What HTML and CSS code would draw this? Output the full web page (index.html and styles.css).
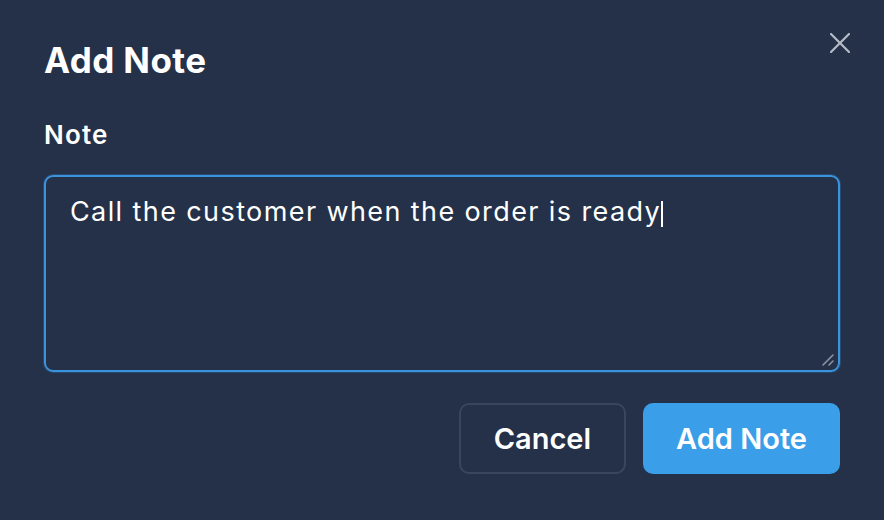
FILE: index.html
```html
<!DOCTYPE html>
<html lang="en">
<head>
<meta charset="utf-8">
<title>Add Note</title>
<link rel="stylesheet" href="styles.css">
</head>
<body>
<div class="dialog" role="dialog" aria-labelledby="dlg-title">
  <button class="close" aria-label="Close">
    <svg width="20" height="20" viewBox="0 0 20 20" fill="none" stroke="currentColor" stroke-width="2.2" stroke-linecap="round"><path d="M1 1L19 19M19 1L1 19"/></svg>
  </button>
  <h2 class="title" id="dlg-title">Add Note</h2>
  <label class="label" for="note">Note</label>
  <div class="field" id="note">
    <span class="value">Call the customer when the order is ready</span><span class="caret"></span>
    <svg class="grip" width="14" height="14" viewBox="0 0 14 14" stroke="#8a93a3" stroke-width="1.6" stroke-linecap="round"><path d="M2 12L12 2M8 12L12 8"/></svg>
  </div>
  <div class="actions">
    <button class="btn btn-secondary">Cancel</button>
    <button class="btn btn-primary">Add Note</button>
  </div>
</div>
</body>
</html>
```
FILE: styles.css
```css
* { box-sizing: border-box; }
html, body { margin: 0; height: 100%; }
body {
  background: #243148;
  font-family: Inter, "Open Sans", sans-serif;
  color: #ffffff;
}
.dialog {
  position: relative;
  height: 520px;
  padding: 39px 44px 46px 44px;
  display: flex;
  flex-direction: column;
}
.close {
  position: absolute;
  top: 33px;
  right: 34px;
  width: 20px;
  height: 20px;
  padding: 0;
  border: 0;
  background: none;
  color: #b4bcc8;
  display: flex;
}
.title {
  margin: 0;
  font-size: 35px;
  line-height: 42px;
  font-weight: 700;
  letter-spacing: 0.4px;
}
.label {
  margin-top: 38px;
  font-size: 26px;
  line-height: 31px;
  font-weight: 600;
  letter-spacing: 1.2px;
}
.field {
  position: relative;
  margin-top: 25px;
  height: 197px;
  border: 2px solid #3b93de;
  border-radius: 9px;
  padding: 18px 22px 18px 24px;
  font-size: 27px;
  line-height: 33px;
  font-weight: 400;
  letter-spacing: 1.4px;
  color: #ffffff;
  box-shadow: 0 0 0 1px rgba(59,147,222,0.25);
}
.caret {
  display: inline-block;
  width: 2px;
  height: 26px;
  background: #ffffff;
  vertical-align: -6px;
}
.grip {
  position: absolute;
  right: 3px;
  bottom: 3px;
}
.actions {
  margin-top: 31px;
  display: flex;
  justify-content: flex-end;
  gap: 17px;
}
.btn {
  height: 71px;
  padding: 0 31px;
  border-radius: 10px;
  font-family: inherit;
  font-size: 29px;
  font-weight: 600;
  color: #ffffff;
  cursor: pointer;
}
.btn-secondary {
  padding: 0 33px;
  background: transparent;
  border: 2px solid #39465b;
}
.btn-primary {
  background: #3b9ee8;
  border: 2px solid #3b9ee8;
}
```
